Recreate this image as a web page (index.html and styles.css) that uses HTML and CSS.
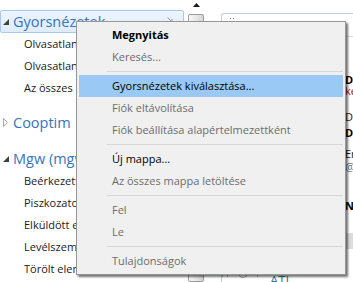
FILE: index.html
```html
<!DOCTYPE html>
<html lang="hu">
<head>
<meta charset="utf-8">
<title>Mappák</title>
<link rel="stylesheet" href="styles.css">
</head>
<body>
<div class="app">
  <nav class="folders">
    <div class="group">
      <div class="node node-selected">
        <svg class="twisty" viewBox="0 0 6 9" width="6" height="9"><polygon points="6,2 6,8 0,8" fill="#404040"/></svg>
        <span class="node-label">Gyorsnézetek</span>
        <svg class="pin" viewBox="0 0 6 6" width="6" height="6"><path d="M0.5 0.5 L5 5 M2 5 H5 V2" stroke="#9a9a9a" stroke-width="1" fill="none"/></svg>
      </div>
      <div class="leaf">Olvasatlan levelek</div>
      <div class="leaf">Olvasatlan vagy megjelölt</div>
      <div class="leaf">Az összes levél</div>
    </div>
    <div class="group">
      <div class="node">
        <svg class="twisty" viewBox="0 0 6 9" width="6" height="9"><polygon points="0.5,0.5 4.5,4.5 0.5,8.5" fill="none" stroke="#a6a6a6" stroke-width="1"/></svg>
        <span class="node-label">Cooptim</span>
      </div>
    </div>
    <div class="group group-last">
      <div class="node">
        <svg class="twisty" viewBox="0 0 6 9" width="6" height="9"><polygon points="6,2 6,8 0,8" fill="#404040"/></svg>
        <span class="node-label">Mgw (mgw@cooptim.hu)</span>
      </div>
      <div class="leaf">Beérkezett üzenetek</div>
      <div class="leaf">Piszkozatok</div>
      <div class="leaf">Elküldött elemek</div>
      <div class="leaf">Levélszemét</div>
      <div class="leaf">Törölt elemek</div>
    </div>
  </nav>

  <div class="vscroll">
    <div class="vscroll-arrow">
      <svg viewBox="0 0 7 4" width="7" height="4"><polygon points="3.5,0 7,4 0,4" fill="#1a1a1a"/></svg>
    </div>
    <div class="vscroll-thumb"></div>
  </div>

  <section class="reading">
    <div class="reading-head">
      <svg class="grip" viewBox="0 0 4 4" width="4" height="4"><rect x="0" y="0" width="1" height="1" fill="#8a8a8a"/><rect x="3" y="0" width="1" height="1" fill="#8a8a8a"/><rect x="0" y="3" width="1" height="1" fill="#b0b0b0"/><rect x="3" y="3" width="1" height="1" fill="#b0b0b0"/></svg>
    </div>
    <div class="msg-list">
      <div class="msg msg-bold m1">Dezső Nagy</div>
      <div class="msg msg-red">kérés</div>
      <div class="msg m2">Dénes Kovács</div>
      <div class="msg msg-bold m3">Dénes Kovács</div>
      <div class="msg m4">Erika Szabó</div>
      <div class="msg msg-mail">@cooptim</div>
      <div class="msg msg-bold m5">Nándor</div>
      <div class="msg-band"></div>
      <div class="msg-foot">
        <span class="foot-btn"><span class="foot-dot"></span></span>
        <span class="foot-text">ATI</span>
      </div>
    </div>
  </section>
</div>

<div class="context-menu" role="menu">
  <div class="menu-item default">Megnyitás</div>
  <div class="menu-item">Keresés...</div>
  <div class="menu-sep"></div>
  <div class="menu-item enabled active">Gyorsnézetek kiválasztása...</div>
  <div class="menu-item">Fiók eltávolítása</div>
  <div class="menu-item">Fiók beállítása alapértelmezettként</div>
  <div class="menu-sep"></div>
  <div class="menu-item enabled">Új mappa...</div>
  <div class="menu-item">Az összes mappa letöltése</div>
  <div class="menu-sep"></div>
  <div class="menu-item">Fel</div>
  <div class="menu-item">Le</div>
  <div class="menu-sep"></div>
  <div class="menu-item">Tulajdonságok</div>
</div>
</body>
</html>
```

FILE: styles.css
```css
* { box-sizing: border-box; }
html, body { margin: 0; padding: 0; }
body {
  width: 353px;
  height: 282px;
  overflow: hidden;
  background: #ffffff;
  font-family: "Open Sans", "Noto Sans", sans-serif;
  position: relative;
}
.app {
  display: flex;
  height: 282px;
}

/* folder tree */
.folders {
  width: 186px;
  flex: none;
  overflow: hidden;
  padding-top: 10px;
}
.group + .group { margin-top: 11px; }
.group-last { margin-top: 12px !important; }
.node {
  display: flex;
  align-items: center;
  height: 24px;
  padding-left: 3px;
  color: #3574c0;
  font-size: 14.5px;
  white-space: nowrap;
}
.node-selected {
  height: 23px;
  width: 184px;
  padding-left: 2px;
  background: linear-gradient(#edf5fd, #deecfb);
  border: 1px solid #a9c8ee;
  border-radius: 2px;
  position: relative;
}
.twisty { flex: none; margin-right: 4px; }
.node-label { flex: none; }
.pin {
  position: absolute;
  left: 166px;
  top: 6px;
}
.leaf {
  height: 22px;
  line-height: 22px;
  padding-left: 24px;
  font-size: 11px;
  color: #1a1a1a;
  white-space: nowrap;
}

/* scrollbar */
.vscroll {
  width: 16px;
  margin-left: 2px;
  flex: none;
  display: flex;
  flex-direction: column;
}
.vscroll-arrow {
  height: 14px;
  display: flex;
  justify-content: center;
  padding-top: 3px;
}
.vscroll-thumb {
  flex: 1;
  border: 1px solid #9c9c9c;
  border-radius: 2px;
  background: linear-gradient(90deg, #f7f7f7, #e4e4e4 60%, #d4d4d4);
}

/* reading / message list */
.reading {
  flex: 1;
  margin-left: 17px;
  margin-top: 13px;
  border: 1px solid #c3cfdd;
  border-right: 0;
  border-bottom: 0;
  border-top-left-radius: 3px;
  display: flex;
  flex-direction: column;
}
.reading-head {
  height: 23px;
  border-bottom: 1px solid #d3dde9;
  padding: 4px 0 0 8px;
}
.grip { display: block; }
.msg-list {
  display: flex;
  flex-direction: column;
  padding-left: 123px;
  font-size: 11px;
  white-space: nowrap;
}
.msg { height: 13px; line-height: 13px; color: #1a1a1a; }
.msg-bold { font-weight: 700; color: #000; }
.msg-red { color: #a40000; height: 10px; line-height: 10px; }
.msg-mail { color: #5a7394; }
.m1 { margin-top: 36px; }
.m2 { margin-top: 14px; }
.m3 { margin-top: 3px; }
.m4 { margin-top: 8px; }
.m5 { margin-top: 26px; }
.msg-band {
  height: 16px;
  margin-top: 21px;
  margin-left: -124px;
  background: #dcdcdc;
}
.msg-foot {
  display: flex;
  align-items: flex-start;
  margin-left: -123px;
  margin-top: 16px;
  gap: 12px;
  border-left: 1px solid #c8c8c8;
  padding-left: 4px;
  height: 12px;
}
.foot-btn {
  width: 31px;
  height: 12px;
  border: 1px solid #b5b5b5;
  border-bottom: 0;
  display: flex;
  justify-content: center;
  padding-top: 2px;
}
.foot-dot {
  width: 10px;
  height: 10px;
  border: 1px solid #a0a0a0;
  border-radius: 50%;
}
.foot-text {
  font-size: 13px;
  color: #3a6fb0;
  line-height: 12px;
  padding-top: 9px;
}

/* context menu */
.context-menu {
  position: absolute;
  left: 76px;
  top: 21px;
  width: 270px;
  padding: 2px;
  background: #f0f0f0;
  border: 1px solid #979797;
  box-shadow: 2px 2px 2px rgba(0, 0, 0, 0.55);
  font-size: 11px;
}
.menu-item {
  height: 22px;
  line-height: 22px;
  padding-left: 33px;
  color: #6d6d6d;
  white-space: nowrap;
}
.menu-item.enabled { color: #000; }
.menu-item.default { color: #000; font-weight: 700; }
.menu-item.active { background: #99c9f4; }
.menu-sep {
  height: 7px;
  margin-left: 28px;
  display: flex;
  align-items: center;
}
.menu-sep::before {
  content: "";
  flex: 1;
  height: 1px;
  background: #d7d7d7;
}
```
